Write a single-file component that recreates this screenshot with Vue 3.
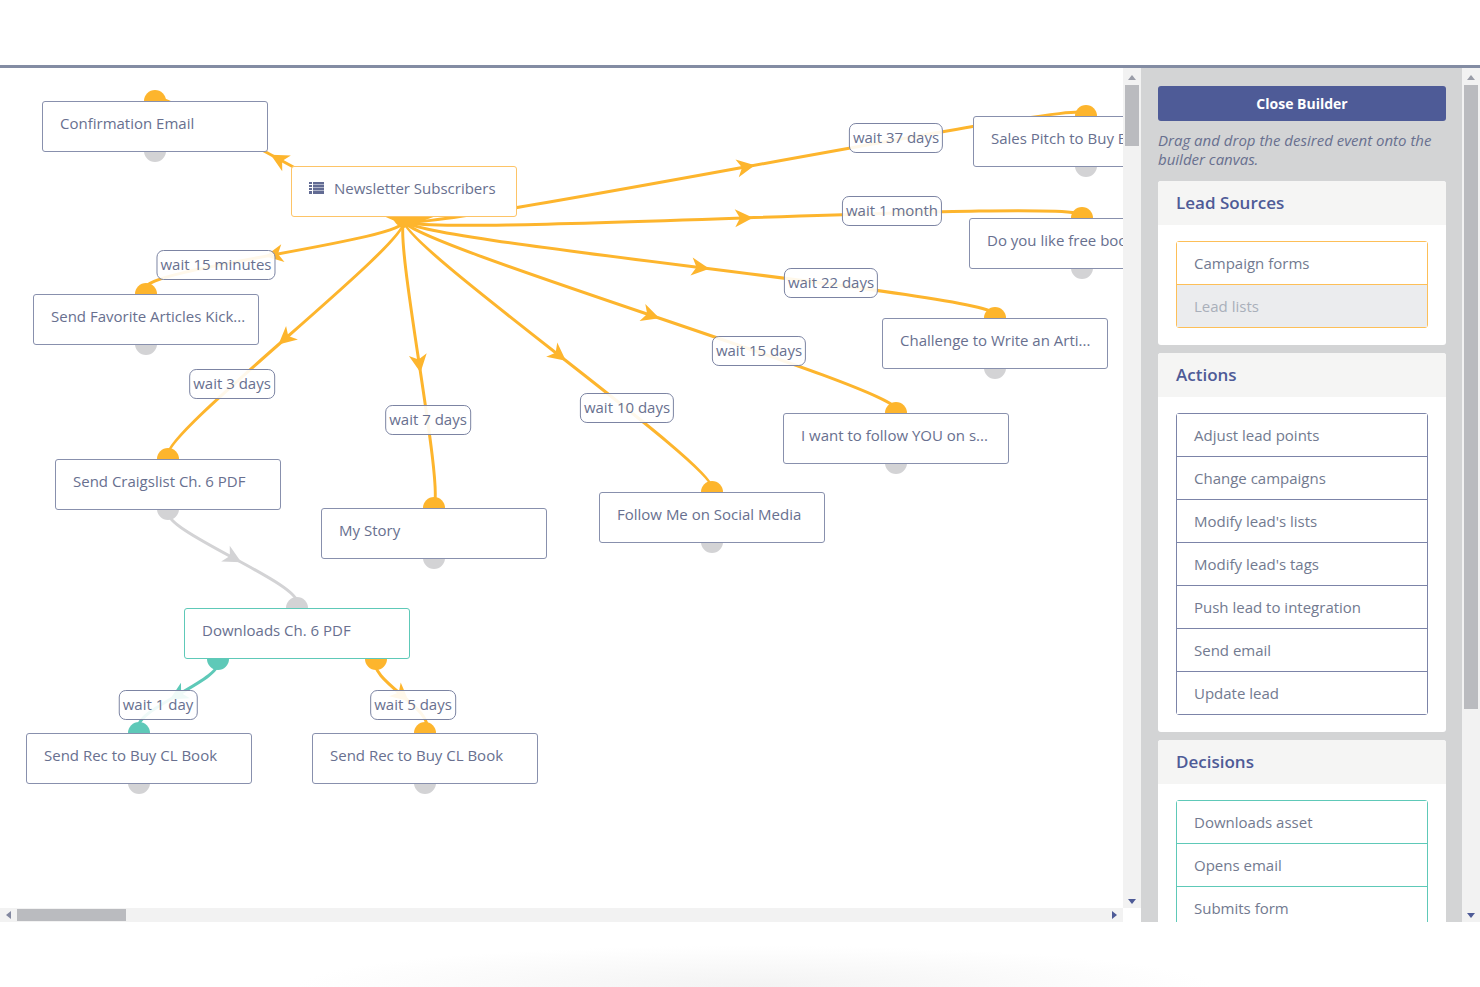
<script setup>
import { ref, computed } from 'vue'

const CURVINESS = 20

const colors = {
  yes: '#5ec9b8',
  no: '#fdb52d',
  none: '#d3d3d5'
}

// Campaign events, placed on the canvas by their top left corner
const nodes = ref([
  { id: 'confirm', x: 42, y: 33, label: 'Confirmation Email', type: 'action', top: 'no' },
  { id: 'source', x: 291, y: 98, label: 'Newsletter Subscribers', type: 'source', icon: true },
  { id: 'articles', x: 33, y: 226, label: 'Send Favorite Articles Kick...', type: 'action', top: 'no' },
  { id: 'sales', x: 973, y: 48, label: 'Sales Pitch to Buy Book', type: 'action', top: 'no' },
  { id: 'free', x: 969, y: 150, label: 'Do you like free books?', type: 'action', top: 'no' },
  { id: 'challenge', x: 882, y: 250, label: 'Challenge to Write an Arti...', type: 'action', top: 'no' },
  { id: 'follow', x: 783, y: 345, label: 'I want to follow YOU on s...', type: 'action', top: 'no' },
  { id: 'social', x: 599, y: 424, label: 'Follow Me on Social Media', type: 'action', top: 'no' },
  { id: 'story', x: 321, y: 440, label: 'My Story', type: 'action', top: 'no' },
  { id: 'craigslist', x: 55, y: 391, label: 'Send Craigslist Ch. 6 PDF', type: 'action', top: 'no' },
  { id: 'download', x: 184, y: 540, label: 'Downloads Ch. 6 PDF', type: 'decision', top: 'none' },
  { id: 'recYes', x: 26, y: 665, label: 'Send Rec to Buy CL Book', type: 'action', top: 'yes' },
  { id: 'recNo', x: 312, y: 665, label: 'Send Rec to Buy CL Book', type: 'action', top: 'no' }
])

const connections = [
  { from: [404, 152], to: [155, 31], kind: 'no' },
  { from: [404, 152], to: [146, 221], kind: 'no', wait: 'wait 15 minutes', at: [216, 197] },
  { from: [404, 152], to: [168, 388], kind: 'no', wait: 'wait 3 days', at: [232, 316] },
  { from: [404, 152], to: [434, 437], kind: 'no', wait: 'wait 7 days', at: [428, 352] },
  { from: [404, 152], to: [712, 421], kind: 'no', wait: 'wait 10 days', at: [627, 340] },
  { from: [404, 152], to: [896, 342], kind: 'no', wait: 'wait 15 days', at: [759, 283] },
  { from: [404, 152], to: [995, 247], kind: 'no', wait: 'wait 22 days', at: [831, 215] },
  { from: [404, 152], to: [1082, 148], kind: 'no', wait: 'wait 1 month', at: [892, 143] },
  { from: [404, 152], to: [1086, 46], kind: 'no', wait: 'wait 37 days', at: [896, 70] },
  { from: [168, 442], to: [297, 537], kind: 'none' },
  { from: [218, 591], to: [139, 662], kind: 'yes', wait: 'wait 1 day', at: [158, 637] },
  { from: [376, 591], to: [426, 662], kind: 'no', wait: 'wait 5 days', at: [413, 637] }
]

const groups = [
  {
    title: 'Lead Sources',
    type: 'source',
    items: [{ label: 'Campaign forms' }, { label: 'Lead lists', disabled: true }]
  },
  {
    title: 'Actions',
    type: 'action',
    items: [
      { label: 'Adjust lead points' },
      { label: 'Change campaigns' },
      { label: "Modify lead's lists" },
      { label: "Modify lead's tags" },
      { label: 'Push lead to integration' },
      { label: 'Send email' },
      { label: 'Update lead' }
    ]
  },
  {
    title: 'Decisions',
    type: 'decision',
    items: [{ label: 'Downloads asset' }, { label: 'Opens email' }, { label: 'Submits form' }]
  }
]

// Bezier that leaves the source downwards and enters the target from above
const lines = computed(() =>
  connections.map(({ from, to, kind }) => {
    const side = from[0] < to[0] ? -10 : 10
    const c1 = [from[0] + side, from[1] + CURVINESS]
    const c2 = [to[0] - side, to[1] - CURVINESS]
    const midX = (from[0] + to[0]) / 2
    const midY = (from[1] + to[1]) / 2
    const dx = to[0] + c2[0] - c1[0] - from[0]
    const dy = to[1] + c2[1] - c1[1] - from[1]
    const angle = (Math.atan2(dy, dx) * 180) / Math.PI
    return {
      d: `M${from} C${c1} ${c2} ${to}`,
      arrow: `translate(${midX} ${midY}) rotate(${angle})`,
      color: colors[kind]
    }
  })
)

const dots = computed(() => {
  const list = []
  nodes.value.forEach((n) => {
    if (n.top) list.push({ x: n.x + 113, y: n.y, color: colors[n.top] })
    if (n.type === 'action') list.push({ x: n.x + 113, y: n.y + 50, color: colors.none })
  })
  list.push({ x: 404, y: 148, color: colors.no })
  list.push({ x: 218, y: 591, color: colors.yes })
  list.push({ x: 376, y: 591, color: colors.no })
  return list
})

const labels = connections.filter((c) => c.wait)
</script>

<template>
  <div class="page">
    <header class="top-bar"></header>

    <main class="builder">
      <section class="canvas-wrap">
        <div class="canvas">
          <svg class="lines" aria-hidden="true">
            <g v-for="(line, i) in lines" :key="i">
              <path :d="line.d" :stroke="line.color" fill="none" stroke-width="3" />
              <path d="M10 0 L-8 -9 L-3 0 L-8 9 Z" :transform="line.arrow" :fill="line.color" />
            </g>
            <path d="M388 148 H436 L404 160 Z" :fill="colors.no" />
            <circle v-for="(dot, i) in dots" :key="'dot' + i" :cx="dot.x" :cy="dot.y" r="11" :fill="dot.color" />
          </svg>

          <div
            v-for="node in nodes"
            :key="node.id"
            class="node"
            :class="node.type"
            :style="{ left: node.x + 'px', top: node.y + 'px' }"
          >
            <svg v-if="node.icon" class="list-icon" viewBox="0 0 15 12" aria-hidden="true">
              <path d="M0 0h3v2H0zM0 3h3v2H0zM0 6h3v2H0zM0 9h3v3H0zM4 0h11v2H4zM4 3h11v2H4zM4 6h11v2H4zM4 9h11v3H4z" />
              <path class="list-icon-gap" d="M4 0h11v12H4z" />
            </svg>
            <span>{{ node.label }}</span>
          </div>

          <div
            v-for="label in labels"
            :key="label.wait"
            class="wait"
            :style="{ left: label.at[0] + 'px', top: label.at[1] + 'px' }"
          >
            {{ label.wait }}
          </div>
        </div>

        <div class="scroll-y">
          <span class="arrow up"></span>
          <span class="thumb short"></span>
          <span class="arrow down"></span>
        </div>
        <div class="scroll-x">
          <span class="arrow left"></span>
          <span class="thumb"></span>
          <span class="arrow right"></span>
        </div>
      </section>

      <aside class="sidebar">
        <button type="button" class="close">Close Builder</button>
        <p class="hint">Drag and drop the desired event onto the builder canvas.</p>

        <section v-for="group in groups" :key="group.title" class="panel">
          <h4>{{ group.title }}</h4>
          <ul class="events" :class="group.type">
            <li v-for="item in group.items" :key="item.label">
              <button type="button" :disabled="item.disabled">{{ item.label }}</button>
            </li>
          </ul>
        </section>
      </aside>

      <div class="scroll-y">
        <span class="arrow up"></span>
        <span class="thumb long"></span>
        <span class="arrow down"></span>
      </div>
    </main>

    <footer class="bottom"></footer>
  </div>
</template>

<style>
body {
  margin: 0;
  background: #fff;
}
</style>

<style scoped>
* {
  box-sizing: border-box;
}

.page {
  display: flex;
  flex-direction: column;
  height: 100vh;
  font-family: 'Open Sans', 'Noto Sans', sans-serif;
  font-size: 15px;
  line-height: 20px;
  color: #68708f;
}

.top-bar {
  height: 68px;
  flex: none;
  border-bottom: 3px solid #838ca3;
}

.bottom {
  height: 65px;
  flex: none;
  background: radial-gradient(ellipse 31% 64% at 51% 100%, #f3f3f3, #fff);
}

.builder {
  flex: 1;
  min-height: 0;
  display: flex;
}

.canvas-wrap {
  flex: 1;
  min-width: 0;
  display: grid;
  grid-template-columns: 1fr 18px;
  grid-template-rows: 1fr 14px;
}

.canvas {
  position: relative;
  overflow: hidden;
}

.lines {
  display: block;
  width: 100%;
  height: 100%;
}

.node {
  position: absolute;
  display: flex;
  width: 226px;
  height: 51px;
  padding: 11px 17px;
  border: 1px solid #8890ad;
  border-radius: 3px;
  background: #fff;
  white-space: nowrap;
}

.node.source {
  border-color: #fdc467;
}

.node.decision {
  border-color: #5ec9b8;
}

.list-icon {
  flex: none;
  width: 15px;
  height: 12px;
  margin: 4px 10px 0 0;
  fill: #626b93;
}

.list-icon-gap {
  fill: rgba(98, 107, 147, 0.5);
}

.wait {
  position: absolute;
  transform: translate(-50%, -50%);
  padding: 3px 3px 5px;
  border: 1px solid #7c84a3;
  border-radius: 7px;
  background: rgba(255, 255, 255, 0.9);
  white-space: nowrap;
}

/* scrollbars */
.scroll-y,
.scroll-x {
  display: flex;
  align-items: center;
  background: #f2f2f2;
}

.scroll-y {
  flex: none;
  flex-direction: column;
  width: 18px;
  padding: 7px 0 4px;
}

.scroll-x {
  padding: 0 6px;
}

.thumb {
  background: #babbbf;
}

.scroll-y .thumb {
  width: 14px;
  margin: 5px 0 auto;
}

.scroll-y .thumb.short {
  height: 61px;
}

.scroll-y .thumb.long {
  height: 74%;
}

.scroll-x .thumb {
  width: 109px;
  height: 12px;
  margin: 0 auto 0 6px;
}

.arrow {
  width: 0;
  height: 0;
  border: 4px solid transparent;
}

.arrow.up {
  border-top: 0;
  border-bottom: 5px solid #9a9da8;
}

.arrow.down {
  border-bottom: 0;
  border-top: 5px solid #4e5b97;
}

.arrow.left {
  border-left: 0;
  border-right: 5px solid #8388a0;
}

.arrow.right {
  border-right: 0;
  border-left: 5px solid #4e5b97;
}

.sidebar {
  flex: none;
  width: 321px;
  padding: 18px 16px 0 17px;
  overflow: hidden;
  background: #d3d4d5;
}

.close {
  display: block;
  width: 100%;
  height: 35px;
  border: 0;
  border-radius: 3px;
  background: #4e5b97;
  color: #fff;
  font: 700 14px/20px 'Open Sans', sans-serif;
}

.hint {
  margin: 10px 0 12px;
  font-style: italic;
  line-height: 19px;
}

.panel {
  margin-bottom: 8px;
  padding-bottom: 17px;
  border-radius: 3px;
  background: #fff;
}

.panel h4 {
  margin: 0 0 16px;
  padding: 12px 18px;
  border-radius: 3px 3px 0 0;
  background: #f5f5f4;
  color: #4e5b97;
  font-size: 17px;
  font-weight: 600;
  line-height: 20px;
}

.events {
  margin: 0 18px;
  padding: 0;
  border: 1px solid #7c84a8;
  border-radius: 3px;
  list-style: none;
}

.events li + li {
  border-top: 1px solid #7c84a8;
}

.events.source,
.events.source li {
  border-color: #fdbf58;
}

.events.decision,
.events.decision li {
  border-color: #5ec9b8;
}

.events button {
  display: block;
  width: 100%;
  height: 42px;
  padding: 0 17px;
  border: 0;
  background: #fff;
  color: #727a90;
  font: inherit;
  text-align: left;
}

.events button:disabled {
  background: #ebecee;
  color: #a9afba;
}
</style>
